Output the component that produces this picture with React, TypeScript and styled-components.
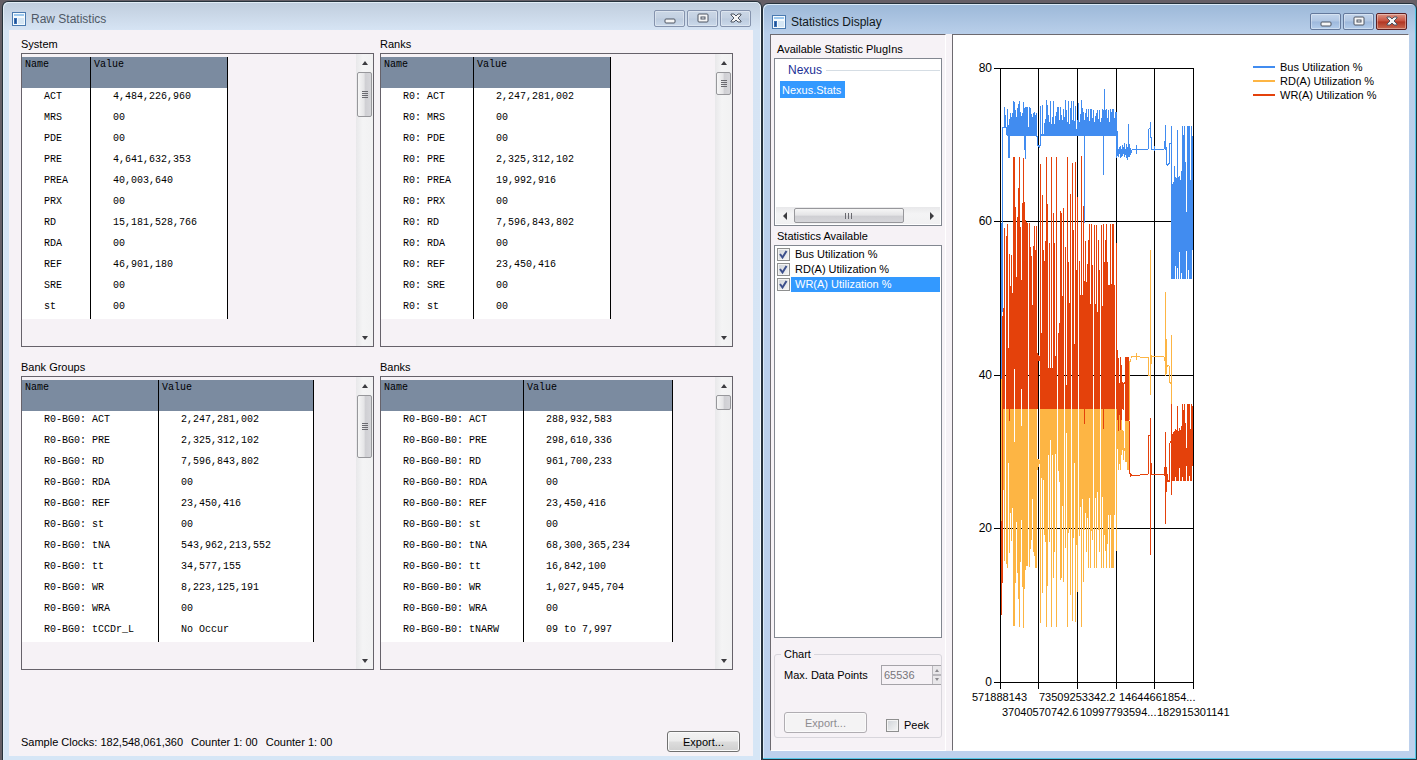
import React from "react";
import styled, { createGlobalStyle, css } from "styled-components";

const GlobalStyle = createGlobalStyle`
  *, *::before, *::after { box-sizing: border-box; }
  body {
    margin: 0;
    background: #655f66;
    font-family: "Liberation Sans", Arial, sans-serif;
    font-size: 11px;
    line-height: 14px;
    color: #000;
  }
`;

/* ---------- window chrome ---------- */

const Desktop = styled.div`
  display: grid;
  grid-template-columns: 760fr 655fr;
  min-height: 100vh;
  padding-left: 2px;
`;

const Window = styled.section<{ $active?: boolean }>`
  display: flex;
  flex-direction: column;
  min-width: 0;
  border: 1px solid #26323c;
  border-radius: 6px 6px 0 0;
  ${(p) =>
    p.$active
      ? css`
          margin-top: 3px;
          padding: 0 7px 8px;
          background: linear-gradient(#9cb8d8, #b9cfea 30px, #bdd1ed);
          box-shadow: inset -1px -1px 0 #52c6e6, inset 1px 1px 0 #dcebf8;
        `
      : css`
          margin-top: 1px;
          padding: 0 8px 4px 6px;
          border-bottom: 0;
          background: linear-gradient(#c0cddd, #d6e4f4 28px, #d6e6f6);
          box-shadow: inset -1px 0 0 #f4f9fd, inset 1px 1px 0 #e2edf6;
        `}
`;

const TitleBar = styled.header<{ $active?: boolean }>`
  display: flex;
  align-items: center;
  height: ${(p) => (p.$active ? 30 : 28)}px;
  padding: ${(p) => (p.$active ? "5px 2px 0" : "5px 2px 0 3px")};
  color: ${(p) => (p.$active ? "#101820" : "#4f5966")};
`;

const Title = styled.h1`
  flex: 1;
  margin: 0 0 0 5px;
  font-size: 12px;
  line-height: 14px;
  font-weight: 400;
`;

const TitleButtons = styled.div`
  display: flex;
  gap: 2px;
`;

const CaptionButton = styled.button<{ $tone: "dim" | "blue" | "red" }>`
  display: grid;
  place-items: center;
  width: 31px;
  height: 17px;
  padding: 0;
  border-radius: 2px;
  border: 1px solid ${(p) => (p.$tone === "red" ? "#5c1f22" : p.$tone === "blue" ? "#64799c" : "#8593ad")};
  background: ${(p) =>
    p.$tone === "red"
      ? "linear-gradient(#dd9585, #c7503c 48%, #b03522 52%, #c9694f)"
      : p.$tone === "blue"
        ? "linear-gradient(#c3d5ec, #b0c6e3 48%, #9db8dc 52%, #b4cdeb)"
        : "linear-gradient(#cbd7e6, #c3d0e1 48%, #bccbde 52%, #cbd9ea)"};
  box-shadow: inset 0 0 0 1px rgba(255, 255, 255, 0.35);
`;

const AppIcon = () => (
  <svg width="14" height="14" viewBox="0 0 14 14" shapeRendering="crispEdges" aria-hidden="true">
    <rect width="14" height="14" fill="#4a7ab0" />
    <rect x="1" y="1" width="12" height="12" fill="#f4fafe" />
    <rect x="2" y="2" width="10" height="2" fill="#9cc8ee" />
    <rect x="2" y="6" width="3" height="6" fill="#3a70b4" />
    <rect x="3" y="7" width="1" height="4" fill="#1f4f94" />
    <rect x="6" y="6" width="6" height="6" fill="#d5e6f4" />
  </svg>
);

const glyphs = {
  Minimize: <rect x="2" y="6" width="10" height="4" rx="1" />,
  Maximize: (
    <>
      <rect x="2" y="1" width="10" height="8" rx="1" />
      <rect x="5" y="4" width="4" height="2" />
    </>
  ),
  Close: <path d="M2 1h3l2 2 2-2h3v1L9 5l3 3v1H9L7 7 5 9H2V8l3-3-3-3z" />,
};

function Captions({ active }: { active?: boolean }) {
  return (
    <TitleButtons>
      {(Object.keys(glyphs) as (keyof typeof glyphs)[]).map((name) => (
        <CaptionButton
          key={name}
          type="button"
          aria-label={name}
          $tone={active ? (name === "Close" ? "red" : "blue") : "dim"}
        >
          <svg width="14" height="11" viewBox="0 0 14 11" fill="#f6f6f6" stroke="#4d5563">
            {glyphs[name]}
          </svg>
        </CaptionButton>
      ))}
    </TitleButtons>
  );
}

/* ---------- scroll bars ---------- */

const ScrollTrack = styled.div<{ $horizontal?: boolean }>`
  display: flex;
  flex: none;
  flex-direction: ${(p) => (p.$horizontal ? "row" : "column")};
  ${(p) => (p.$horizontal ? "height: 17px;" : "width: 17px;")}
  background: linear-gradient(${(p) => (p.$horizontal ? "180deg" : "90deg")}, #e8e8ea, #f4f4f5 40%, #f1f1f2);
`;

const ScrollArrow = styled.button<{ $last?: boolean }>`
  display: grid;
  place-items: center;
  width: 17px;
  height: 17px;
  padding: 0;
  border: 0;
  background: transparent;
  ${(p) => p.$last && "margin: auto 0 0 auto;"}
`;

const Thumb = styled.div<{ $size: number; $horizontal?: boolean }>`
  display: grid;
  place-items: center;
  margin: ${(p) => (p.$horizontal ? "1px 0 1px 1px" : "1px 1px 0")};
  width: ${(p) => (p.$horizontal ? `${p.$size}px` : "15px")};
  height: ${(p) => (p.$horizontal ? "15px" : `${p.$size}px`)};
  border: 1px solid #97979b;
  border-radius: 2px;
  background: linear-gradient(${(p) => (p.$horizontal ? "180deg" : "90deg")}, #f6f6f6, #e4e4e6 48%, #cfcfd3 54%, #d6d6da);
`;

const arrowPaths = {
  up: "M1 6L4 2L7 6z",
  down: "M1 2L4 6L7 2z",
  left: "M6 0L2 4L6 8z",
  right: "M2 0L6 4L2 8z",
};

function Arrow({ dir, last }: { dir: keyof typeof arrowPaths; last?: boolean }) {
  return (
    <ScrollArrow type="button" aria-label={`Scroll ${dir}`} $last={last}>
      <svg width="8" height="8" viewBox="0 0 8 8" fill="#3c3c40">
        <path d={arrowPaths[dir]} />
      </svg>
    </ScrollArrow>
  );
}

function ScrollBar({ thumb, horizontal }: { thumb: number; horizontal?: boolean }) {
  return (
    <ScrollTrack $horizontal={horizontal}>
      <Arrow dir={horizontal ? "left" : "up"} />
      <Thumb $size={thumb} $horizontal={horizontal}>
        {thumb > 20 && (
          <svg width="8" height="8" viewBox="0 0 8 8" fill="#6a6a70" shapeRendering="crispEdges">
            <path
              d={
                horizontal
                  ? "M0 1h1v6h-1zM3 1h1v6h-1zM6 1h1v6h-1z"
                  : "M1 0h6v1h-6zM1 2h6v1h-6zM1 4h6v1h-6zM1 6h6v1h-6z"
              }
            />
          </svg>
        )}
      </Thumb>
      <Arrow dir={horizontal ? "right" : "down"} last />
    </ScrollTrack>
  );
}

/* ---------- raw statistics ---------- */

const RawBody = styled.main`
  display: flex;
  flex: 1;
  flex-direction: column;
  padding: 5px 13px 4px 12px;
  background: #f6f2f6;
`;

const TableGrid = styled.div`
  display: grid;
  grid-template-columns: 1fr 1fr;
  gap: 11px 6px;
  padding-right: 7px;
`;

const PanelTitle = styled.h2`
  margin: 0;
  height: 18px;
  font-size: 11px;
  line-height: 18px;
  font-weight: 400;
`;

const TablePanel = styled.div`
  display: flex;
  justify-content: space-between;
  height: 294px;
  border: 1px solid #66626a;
`;

const StatTable = styled.table<{ $name: number; $value: number }>`
  align-self: flex-start;
  margin-top: 3px;
  table-layout: fixed;
  width: ${(p) => p.$name + p.$value}px;
  border-collapse: separate;
  border-spacing: 0;
  background: #fff;
  font-family: "Liberation Mono", "Courier New", monospace;
  font-size: 10px;
  line-height: 14px;
  th, td {
    padding: 0 0 0 22px;
    border-right: 1px solid #000;
    text-align: left;
    font-weight: 400;
    white-space: nowrap;
  }
  th:first-child { width: ${(p) => p.$name}px; }
  thead th {
    height: 31px;
    padding: 1px 0 0 3px;
    vertical-align: top;
    background: #7b8ba0;
  }
  tbody th, tbody td {
    height: 21px;
    padding-top: 2px;
    vertical-align: top;
  }
`;

type Row = [string, string];

const tables: { title: string; prefix: string; name: number; value: number; thumb: number; rows: Row[] }[] = [
  {
    title: "System", prefix: "", name: 69, value: 137, thumb: 45,
    rows: [
      ["ACT", "4,484,226,960"], ["MRS", "00"], ["PDE", "00"], ["PRE", "4,641,632,353"],
      ["PREA", "40,003,640"], ["PRX", "00"], ["RD", "15,181,528,766"], ["RDA", "00"],
      ["REF", "46,901,180"], ["SRE", "00"], ["st", "00"],
    ],
  },
  {
    title: "Ranks", prefix: "R0: ", name: 93, value: 137, thumb: 23,
    rows: [
      ["ACT", "2,247,281,002"], ["MRS", "00"], ["PDE", "00"], ["PRE", "2,325,312,102"],
      ["PREA", "19,992,916"], ["PRX", "00"], ["RD", "7,596,843,802"], ["RDA", "00"],
      ["REF", "23,450,416"], ["SRE", "00"], ["st", "00"],
    ],
  },
  {
    title: "Bank Groups", prefix: "R0-BG0: ", name: 137, value: 155, thumb: 63,
    rows: [
      ["ACT", "2,247,281,002"], ["PRE", "2,325,312,102"], ["RD", "7,596,843,802"], ["RDA", "00"],
      ["REF", "23,450,416"], ["st", "00"], ["tNA", "543,962,213,552"], ["tt", "34,577,155"],
      ["WR", "8,223,125,191"], ["WRA", "00"], ["tCCDr_L", "No Occur"],
    ],
  },
  {
    title: "Banks", prefix: "R0-BG0-B0: ", name: 143, value: 149, thumb: 15,
    rows: [
      ["ACT", "288,932,583"], ["PRE", "298,610,336"], ["RD", "961,700,233"], ["RDA", "00"],
      ["REF", "23,450,416"], ["st", "00"], ["tNA", "68,300,365,234"], ["tt", "16,842,100"],
      ["WR", "1,027,945,704"], ["WRA", "00"], ["tNARW", "09 to 7,997"],
    ],
  },
];

const StatusRow = styled.footer`
  display: flex;
  align-items: center;
  gap: 8px;
  margin-top: auto;
`;

const PushButton = styled.button<{ $width: number }>`
  width: ${(p) => p.$width}px;
  height: 21px;
  padding: 0;
  border: 1px solid #707070;
  border-radius: 3px;
  background: linear-gradient(#f3f3f3, #ebebeb 48%, #dddddd 52%, #cfcfcf);
  box-shadow: inset 0 0 0 1px #fafafa;
  font: inherit;
  color: #000;
  &:disabled {
    border-color: #b0adb2;
    background: #f4f3f4;
    color: #8e8c90;
  }
`;

const EndButton = styled(PushButton)`
  margin-left: auto;
`;

function RawStatistics() {
  return (
    <Window>
      <TitleBar>
        <AppIcon />
        <Title>Raw Statistics</Title>
        <Captions />
      </TitleBar>
      <RawBody>
        <TableGrid>
          {tables.map((t) => (
            <section key={t.title}>
              <PanelTitle>{t.title}</PanelTitle>
              <TablePanel>
                <StatTable $name={t.name} $value={t.value}>
                  <thead>
                    <tr>
                      <th scope="col">Name</th>
                      <th scope="col">Value</th>
                    </tr>
                  </thead>
                  <tbody>
                    {t.rows.map(([name, value]) => (
                      <tr key={name}>
                        <th scope="row">{t.prefix + name}</th>
                        <td>{value}</td>
                      </tr>
                    ))}
                  </tbody>
                </StatTable>
                <ScrollBar thumb={t.thumb} />
              </TablePanel>
            </section>
          ))}
        </TableGrid>
        <StatusRow>
          <span>Sample Clocks: 182,548,061,360</span>
          <span>Counter 1: 00</span>
          <span>Counter 1: 00</span>
          <EndButton type="button" $width={73}>Export...</EndButton>
        </StatusRow>
      </RawBody>
    </Window>
  );
}

/* ---------- statistics display: side panel ---------- */

const DisplayBody = styled.main`
  display: grid;
  grid-template-columns: 176px 1fr;
  gap: 6px;
  flex: 1;
  background: #f6f2f6;
`;

const sunken = css`
  border: 1px solid;
  border-color: #6d6a70 #fff #fff #6d6a70;
`;

const SidePanel = styled.aside`
  ${sunken}
  display: flex;
  flex-direction: column;
  padding: 5px 3px 12px;
`;

const SideTitle = styled(PanelTitle)`
  padding-left: 3px;
`;

const PluginList = styled.div`
  display: flex;
  flex-direction: column;
  height: 168px;
  margin-bottom: 1px;
  padding: 4px 1px 1px;
  border: 1px solid #828790;
  background: #fff;
`;

const GroupHeader = styled.h3`
  display: flex;
  align-items: center;
  gap: 4px;
  margin: 0 0 4px 12px;
  font-size: 12px;
  line-height: 14px;
  font-weight: 400;
  color: #1a2f96;
  &::after {
    content: "";
    flex: 1;
    height: 1px;
    background: #d5dde4;
  }
`;

const PluginItem = styled.button`
  align-self: flex-start;
  width: 65px;
  height: 17px;
  margin: 0 0 auto 4px;
  padding: 0 2px;
  border: 0;
  background: #3399ff;
  color: #fff;
  font: inherit;
  text-align: left;
`;

const StatList = styled.ul`
  flex: 1;
  margin: 0;
  padding: 1px;
  list-style: none;
  border: 1px solid #828790;
  background: #fff;
`;

const CheckLabel = styled.label`
  display: flex;
  align-items: center;
  gap: 1px;
  height: 15px;
`;

const CheckText = styled.span<{ $selected?: boolean }>`
  flex: 1;
  padding-left: 4px;
  line-height: 15px;
  ${(p) => p.$selected && "background: #3399ff; color: #fff;"}
`;

const CheckFrame = styled.span`
  display: grid;
  flex: none;
  margin-left: 1px;
  > * { grid-area: 1 / 1; }
  svg { pointer-events: none; }
  input:not(:checked) + svg { visibility: hidden; }
`;

const CheckInput = styled.input`
  appearance: none;
  width: 13px;
  height: 13px;
  margin: 0;
  border: 1px solid #8e8f8f;
  background: linear-gradient(135deg, #cfd3d8, #f6f6f6);
  box-shadow: inset 0 0 0 1px #f4f4f4;
`;

function Check({ label, checked, selected }: { label: string; checked?: boolean; selected?: boolean }) {
  return (
    <CheckLabel>
      <CheckFrame>
        <CheckInput type="checkbox" defaultChecked={checked} />
        <svg width="13" height="13" viewBox="0 0 13 13" fill="none" stroke="#3c4f8c" strokeWidth="2">
          <path d="M3 6l2.500 3.500L9.500 3" />
        </svg>
      </CheckFrame>
      <CheckText $selected={selected}>{label}</CheckText>
    </CheckLabel>
  );
}

const ChartGroup = styled.fieldset`
  min-width: 0;
  margin: 9px 0 0;
  padding: 4px 0 4px 9px;
  border: 1px solid #d8d6dc;
  border-radius: 3px;
  legend {
    margin-left: -3px;
    padding: 0 3px;
    line-height: 14px;
  }
`;

const GroupRow = styled.div<{ $align: string }>`
  display: flex;
  justify-content: space-between;
  align-items: ${(p) => p.$align};
  & + & { margin-top: 27px; padding-right: 12px; }
`;

const Spinner = styled.div`
  display: flex;
  width: 60px;
  height: 20px;
  border: 1px solid #a5a3a8;
  border-right: 0;
  input {
    flex: 1;
    min-width: 0;
    padding: 0 0 0 2px;
    border: 0;
    background: transparent;
    font: inherit;
    color: #77757a;
  }
`;

const seriesNames = ["Bus Utilization %", "RD(A) Utilization %", "WR(A) Utilization %"];

function Side() {
  return (
    <SidePanel>
      <SideTitle>Available Statistic PlugIns</SideTitle>
      <PluginList>
        <GroupHeader>Nexus</GroupHeader>
        <PluginItem type="button">Nexus.Stats</PluginItem>
        <ScrollBar thumb={110} horizontal />
      </PluginList>
      <SideTitle>Statistics Available</SideTitle>
      <StatList>
        {seriesNames.map((name, i) => (
          <li key={name}>
            <Check label={name} checked selected={i === 2} />
          </li>
        ))}
      </StatList>
      <ChartGroup>
        <legend>Chart</legend>
        <GroupRow $align="center">
          <label htmlFor="points">Max. Data Points</label>
          <Spinner>
            <input id="points" type="text" defaultValue="65536" disabled />
            <svg width="9" height="18" viewBox="0 0 9 18" aria-hidden="true">
              <path d="M0 0H9V18H0z" fill="#e9e7ea" />
              <path d="M0 0V18M0 9H9" stroke="#b9b7bc" strokeWidth="2" />
              <path d="M3 6l2-3 2 3zM3 12l2 3 2-3z" fill="#8b898e" />
            </svg>
          </Spinner>
        </GroupRow>
        <GroupRow $align="flex-end">
          <PushButton type="button" $width={83} disabled>Export...</PushButton>
          <Check label="Peek" />
        </GroupRow>
      </ChartGroup>
    </SidePanel>
  );
}

/* ---------- statistics display: chart ---------- */

const ChartPanel = styled.section`
  ${sunken}
  display: flex;
  align-items: flex-start;
  gap: 20px;
  background: #fff;
  > svg { flex: none; }
`;

const Legend = styled.ul`
  margin: 0;
  padding: 25px 0 0;
  list-style: none;
`;

const LegendItem = styled.li<{ $color: string }>`
  display: flex;
  align-items: center;
  gap: 5px;
  white-space: nowrap;
  &::before {
    content: "";
    width: 22px;
    height: 2px;
    background: ${(p) => p.$color};
  }
`;

const BLUE = "#418cf0";
const AMBER = "#fdb544";
const RED = "#e4410b";

type Span = [x: number, top: number, bottom: number];

/* Densely sampled part of each series, one entry per column from x = 1002. 0 is a gap. */
const FIRST = 1002;

const busTop = [
  127, 127, 107, 127, 127, 109, 125, 119, 113, 117, 113, 101, 102, 110, 117, 108, 104, 101, 112, 116, 113, 102, 108,
  107, 107, 107, 127, 107, 108, 114, 117, 113, 112, 115, 113, 137, 145, 145, 106, 134, 105, 134, 123, 119, 100, 105,
  115, 122, 101, 124, 117, 101, 124, 116, 112, 107, 107, 120, 107, 115, 120, 109, 117, 100, 110, 122, 101, 124, 108,
  101, 120, 101, 121, 106, 129, 120, 103, 122, 114, 100, 108, 112, 120, 113, 109, 117, 109, 121, 109, 109, 118, 110,
  122, 116, 113, 110, 119, 110, 122, 118, 109, 110, 89, 110, 109, 118, 110, 122, 109, 112, 109, 109, 118, 112,
];

const wrTop = [
  316, 308, 228, 0, 236, 224, 348, 254, 286, 255, 293, 157, 157, 207, 277, 217, 188, 157, 227, 280, 203, 158, 202,
  220, 222, 223, 0, 223, 247, 256, 305, 246, 226, 250, 226, 353, 0, 0, 164, 333, 195, 250, 261, 241, 157, 204, 368,
  243, 368, 157, 368, 213, 243, 356, 157, 0, 333, 323, 211, 213, 296, 208, 0, 247, 385, 157, 262, 303, 194, 0, 163,
  230, 344, 162, 270, 197, 0, 261, 295, 156, 295, 206, 281, 241, 282, 264, 240, 224, 304, 224, 265, 0, 225, 304, 225,
  312, 240, 270, 0, 225, 306, 224, 262, 240, 224, 262, 285, 285, 224, 284, 224, 224, 285, 0, 243,
];

const rdBottom = [
  418, 490, 561, 0, 564, 568, 463, 553, 513, 541, 508, 626, 626, 583, 522, 573, 599, 627, 562, 520, 587, 628, 589,
  570, 566, 566, 0, 567, 549, 540, 499, 552, 556, 568, 568, 0, 0, 0, 623, 478, 593, 480, 535, 542, 627, 586, 455, 542,
  440, 627, 455, 578, 552, 454, 627, 0, 471, 482, 580, 578, 506, 582, 0, 548, 433, 627, 533, 528, 595, 0, 621, 538,
  463, 622, 545, 592, 0, 536, 507, 627, 499, 582, 530, 513, 552, 518, 568, 498, 568, 531, 540, 0, 568, 498, 568, 492,
  530, 552, 0, 568, 497, 568, 535, 551, 568, 544, 515, 568, 515, 568, 568, 568, 515, 0, 551,
];

const fromTops = (tops: number[], x0: number, bottom: number): Span[] =>
  tops.flatMap((t, i): Span[] => (t ? [[x0 + i, t, bottom]] : []));

const fromBottoms = (bottoms: number[], x0: number, top: number): Span[] =>
  bottoms.flatMap((b, i): Span[] => (b ? [[x0 + i, top, b]] : []));

const toPath = (spans: Span[]) => spans.map(([x, a, b]) => `M${x} ${a}h1V${b}h-1z`).join("");

const busPath = toPath([
  ...fromTops(busTop, FIRST, 136).filter(([x, t]) => t < 135 && x > 1006),
  [1001, 223, 380], [1002, 127, 312], [1003, 127, 128], [1004, 107, 128], [1005, 115, 128], [1006, 127, 135],
  [1008, 130, 158], [1009, 120, 158], [1025, 107, 159], [1024, 108, 150],
  [1036, 130, 137], [1037, 136, 146], [1038, 145, 147], [1039, 145, 148], [1040, 134, 146],
  [1084, 135, 223], [1103, 135, 175],
  [1116, 112, 158], [1117, 131, 156], [1118, 149, 157], [1119, 147, 154], [1120, 146, 158], [1121, 149, 157],
  [1122, 145, 156], [1123, 147, 154], [1124, 143, 157], [1125, 149, 155], [1126, 144, 158], [1127, 147, 160],
  [1128, 124, 157], [1129, 144, 157], [1130, 148, 155], [1131, 150, 153],
  [1136, 145, 154], [1148, 129, 149], [1149, 128, 129], [1150, 122, 138], [1151, 137, 150], [1154, 146, 151],
  [1164, 141, 149], [1165, 125, 150], [1166, 147, 165], [1167, 164, 166], [1168, 163, 165], [1169, 143, 164],
  [1170, 143, 144],
  ...fromTops([126, 184, 182, 166, 177, 178, 130, 177, 176, 180, 171, 126, 135, 126, 162, 126], 1171, 279),
  [1187, 126, 279], [1188, 126, 279], [1189, 126, 279], [1190, 180, 279], [1191, 126, 279], [1192, 136, 279],
]);

const busLine = "M1132 149h16v1h-16zM1152 149h12v1h-12z";
const busGaps = toPath([
  [1175, 266, 279], [1177, 268, 279], [1179, 252, 279], [1181, 273, 279], [1186, 126, 212], [1186, 251, 279],
  [1188, 270, 279], [1192, 250, 279],
]);

const rdPath = toPath([
  ...fromBottoms(rdBottom, FIRST, 408),
  [1001, 379, 521], [1003, 405, 408], [1004, 404, 408], [1025, 407, 409], [1026, 405, 409], [1027, 405, 409],
  [1029, 406, 409], [1037, 459, 470], [1038, 459, 467], [1039, 460, 464],
  [1117, 420, 449], [1118, 431, 470], [1119, 415, 464], [1120, 430, 470], [1121, 420, 455], [1122, 430, 450],
  [1123, 431, 460], [1124, 448, 451], [1125, 421, 462], [1126, 421, 462], [1127, 421, 470], [1128, 421, 470],
  [1129, 361, 420], [1130, 359, 362], [1131, 356, 358], [1136, 353, 360], [1148, 357, 376], [1149, 375, 376],
  [1150, 250, 395], [1151, 355, 364], [1164, 357, 361], [1165, 292, 376], [1166, 339, 374], [1167, 365, 367],
  [1168, 365, 366], [1169, 366, 383], [1170, 382, 384], [1171, 335, 405],
]);
const rdLine = "M1132 356h8v1h-8zM1140 357h8v1h-8zM1152 356h12v1h-12z";

const wrPath = toPath([
  ...fromTops(wrTop, FIRST, 409),
  [1001, 521, 615], [1002, 409, 583], [1009, 409, 421], [1037, 353, 361], [1038, 355, 361], [1039, 356, 361],
  [1084, 409, 424], [1103, 409, 429],
  [1117, 350, 420], [1118, 358, 431], [1119, 383, 415], [1120, 357, 430], [1121, 365, 420], [1122, 382, 409],
  [1123, 383, 410], [1124, 382, 384], [1125, 357, 421], [1126, 357, 421], [1127, 357, 421], [1128, 357, 421],
  [1129, 421, 474], [1130, 473, 477], [1131, 474, 476], [1148, 435, 474], [1149, 435, 436], [1150, 418, 555],
  [1151, 463, 475], [1164, 467, 476], [1165, 432, 524], [1166, 467, 492], [1167, 474, 482], [1168, 480, 482],
  [1169, 443, 482], [1170, 441, 443], [1171, 404, 495],
  ...fromTops([434, 432, 431, 429, 430, 406, 431, 428, 430, 426, 404, 410, 404, 423, 404], 1172, 481),
  [1187, 404, 481], [1188, 404, 481], [1189, 404, 481], [1190, 429, 481], [1191, 404, 481], [1192, 406, 481],
]);
const wrLine = "M1132 475h8v1h-8zM1140 474h8v1h-8zM1152 474h12v1h-12z";
const wrGaps = toPath([
  [1014, 369, 442], [1021, 389, 426], [1175, 477, 481], [1179, 468, 481], [1182, 477, 481], [1186, 404, 448],
  [1186, 466, 481], [1189, 476, 481], [1192, 466, 481],
]);

const gridY = [68, 221, 375, 528, 682];
const gridX = [1000, 1038, 1077, 1116, 1154, 1193];
const gridPath =
  gridY.map((y) => `M994 ${y}h200v1h-200z`).join("") + gridX.map((x) => `M${x} 68h1v621h-1z`).join("");

const xLabels: [number, number, string][] = [
  [972, 701, "571888143"],
  [1039, 701, "73509253342.2"],
  [1119, 701, "14644661854..."],
  [1002, 716, "37040570742.6"],
  [1080, 716, "10997793594..."],
  [1157, 716, "182915301141"],
];

function Chart() {
  return (
    <svg width="280" height="690" viewBox="953 35 280 690" role="img" aria-label="Utilization over time">
      <g shapeRendering="crispEdges">
        <path d={gridPath} fill="#000" />
        <path d={busPath + busLine} fill={BLUE} />
        <path d={busGaps} fill="#fff" />
        <path d={rdPath + rdLine} fill={AMBER} />
        <path d={wrPath + wrLine} fill={RED} />
        <path d={wrGaps} fill="#fff" />
      </g>
      <g fontSize="12" textAnchor="end">
        {gridY.map((y, i) => (
          <text key={y} x="992" y={y + 4}>{80 - i * 20}</text>
        ))}
      </g>
      <g fontSize="11">
        {xLabels.map(([x, y, text]) => (
          <text key={text} x={x} y={y}>{text}</text>
        ))}
      </g>
    </svg>
  );
}

function StatisticsDisplay() {
  return (
    <Window $active>
      <TitleBar $active>
        <AppIcon />
        <Title>Statistics Display</Title>
        <Captions active />
      </TitleBar>
      <DisplayBody>
        <Side />
        <ChartPanel>
          <Chart />
          <Legend>
            {seriesNames.map((name, i) => (
              <LegendItem key={name} $color={[BLUE, AMBER, RED][i]}>{name}</LegendItem>
            ))}
          </Legend>
        </ChartPanel>
      </DisplayBody>
    </Window>
  );
}

export default function App() {
  return (
    <>
      <GlobalStyle />
      <Desktop>
        <RawStatistics />
        <StatisticsDisplay />
      </Desktop>
    </>
  );
}
